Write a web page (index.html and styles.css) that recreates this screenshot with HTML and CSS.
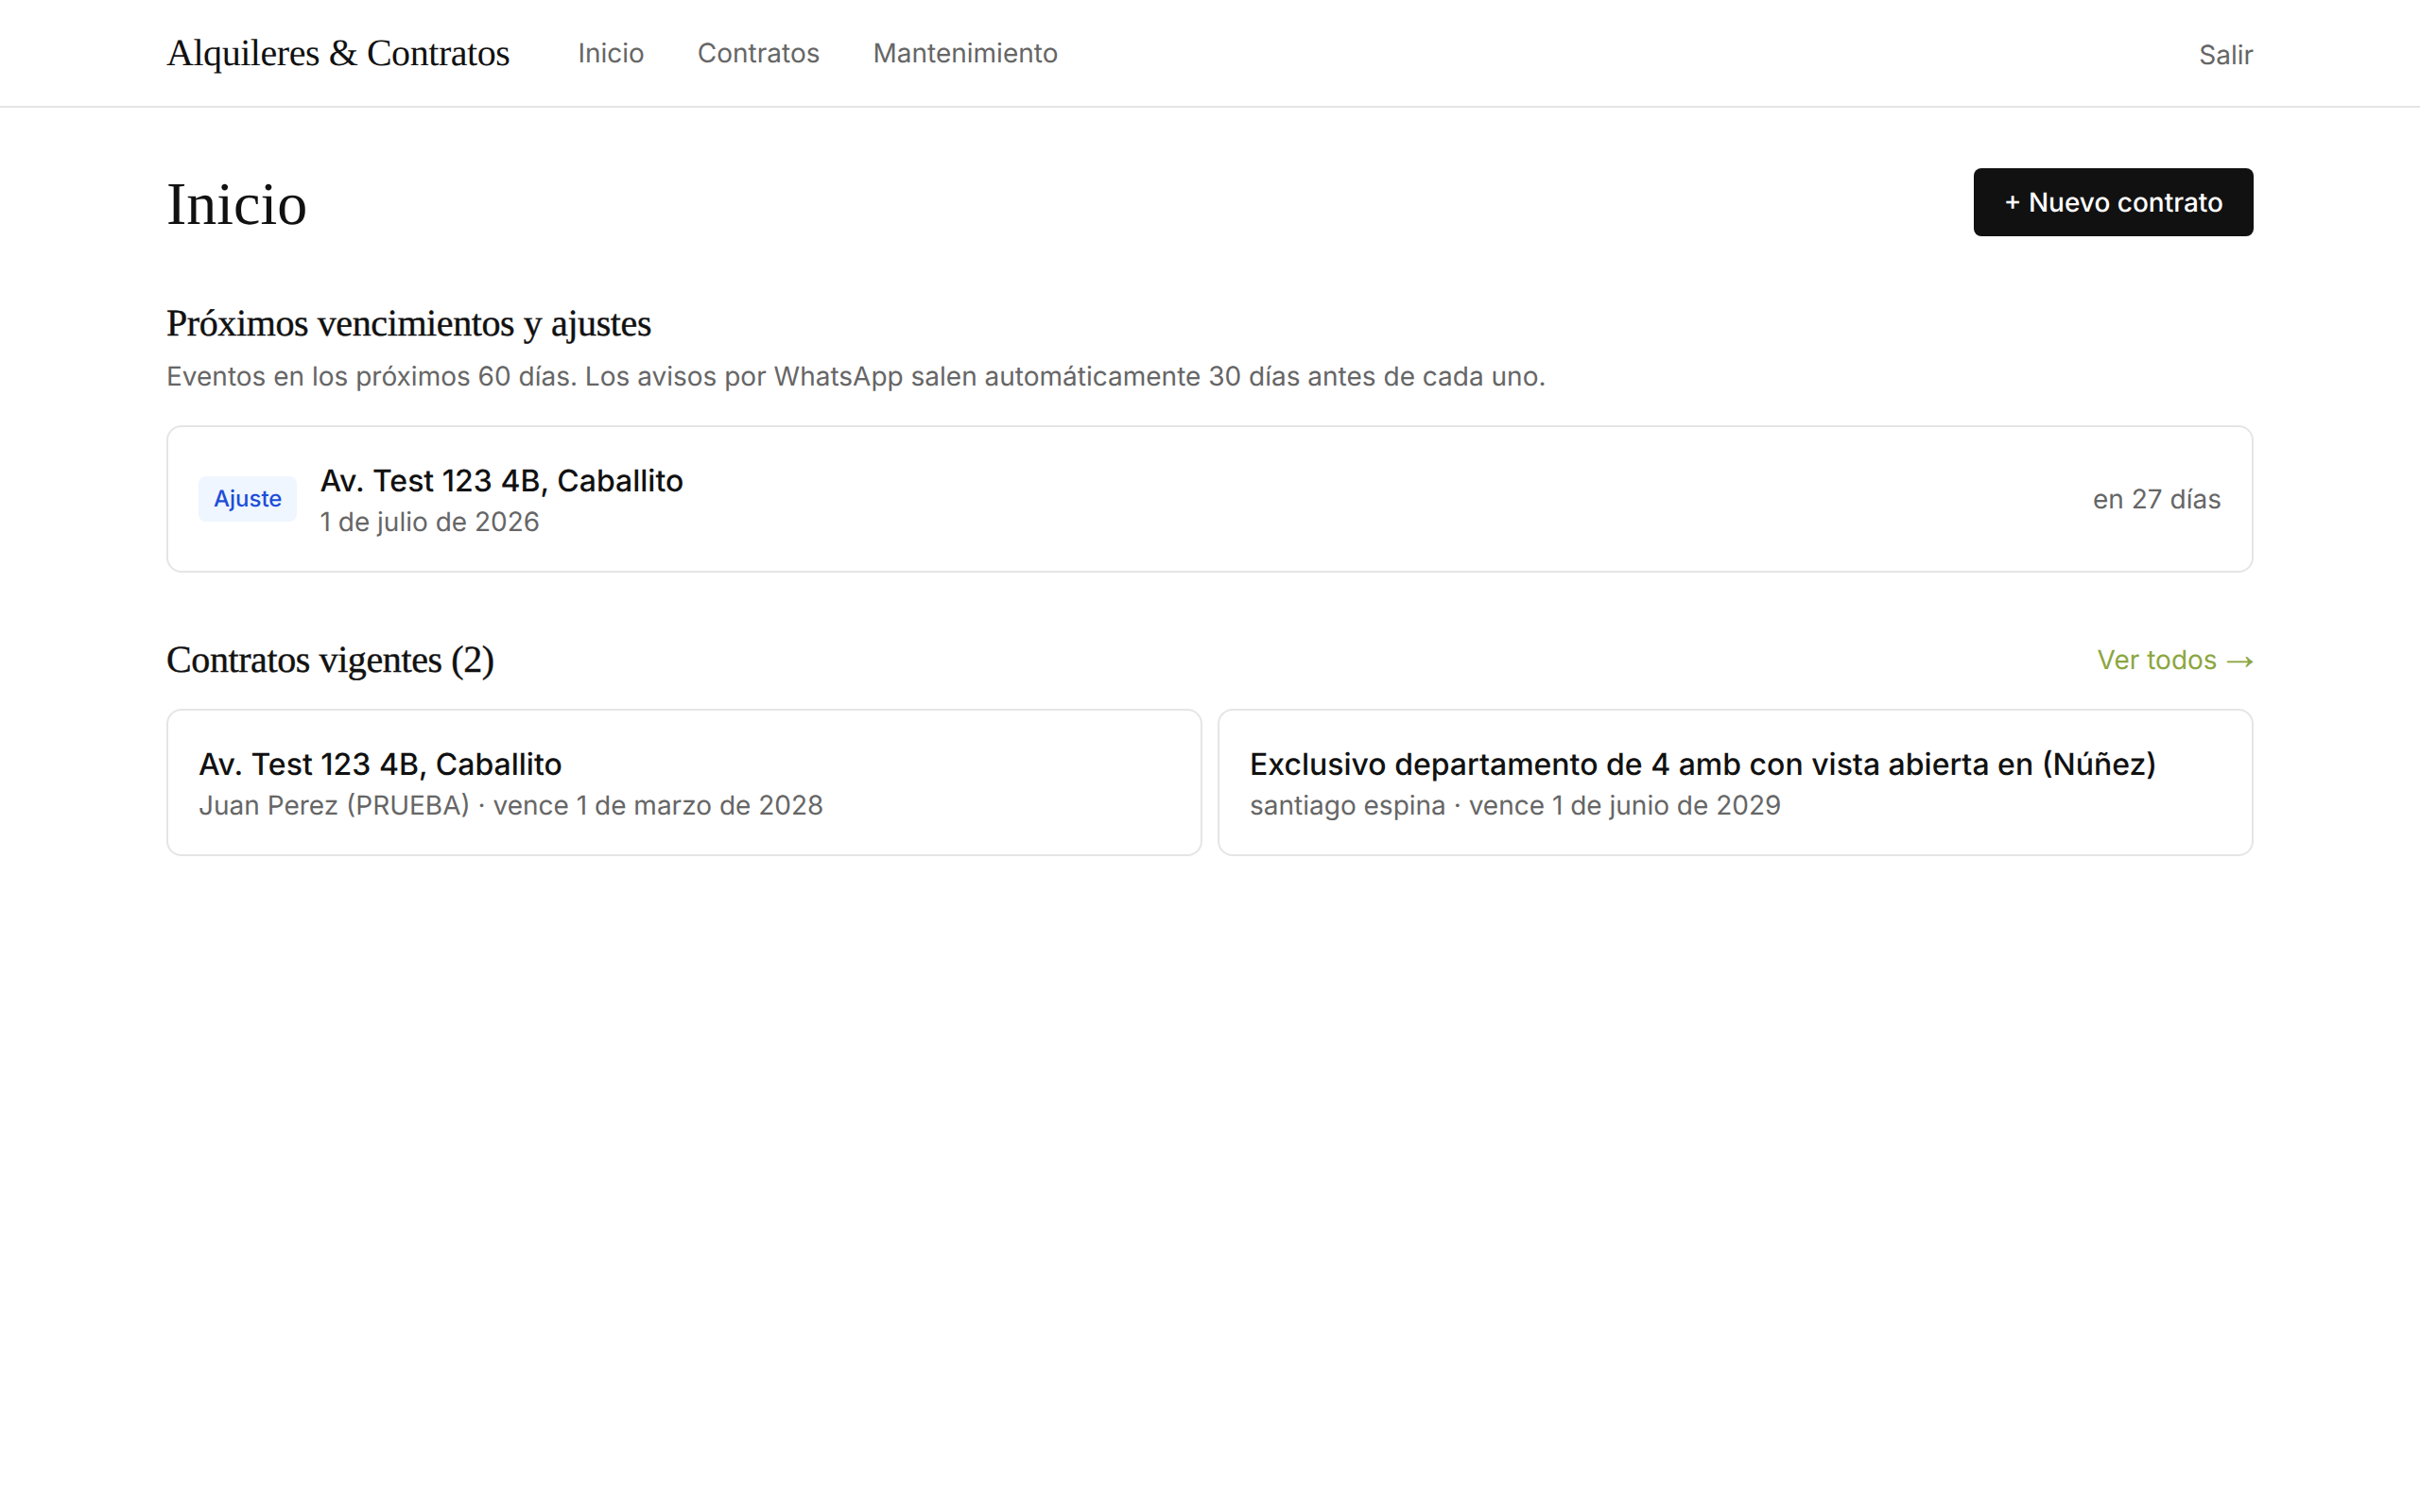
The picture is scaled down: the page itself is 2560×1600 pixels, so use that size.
FILE: index.html
```html
<!DOCTYPE html>
<html lang="es">
<head>
<meta charset="utf-8">
<title>Alquileres &amp; Contratos</title>
<link rel="stylesheet" href="styles.css">
</head>
<body>
<header class="topbar">
  <div class="topbar-inner">
    <div class="topbar-left">
      <a class="brand" href="#">Alquileres &amp; Contratos</a>
      <nav class="nav">
        <a href="#">Inicio</a>
        <a href="#">Contratos</a>
        <a href="#">Mantenimiento</a>
      </nav>
    </div>
    <a class="logout" href="#">Salir</a>
  </div>
</header>
<main class="page">
  <div class="page-head">
    <h1>Inicio</h1>
    <a class="btn" href="#">+ Nuevo contrato</a>
  </div>
  <section class="section">
    <h2>Próximos vencimientos y ajustes</h2>
    <p class="lead">Eventos en los próximos 60 días. Los avisos por WhatsApp salen automáticamente 30 días antes de cada uno.</p>
    <div class="card event">
      <div class="event-main">
        <span class="badge">Ajuste</span>
        <div>
          <div class="card-title">Av. Test 123 4B, Caballito</div>
          <div class="card-sub">1 de julio de 2026</div>
        </div>
      </div>
      <div class="event-when">en 27 días</div>
    </div>
  </section>
  <section class="section">
    <div class="section-head">
      <h2>Contratos vigentes (2)</h2>
      <a class="more" href="#">Ver todos <span class="arrow">→</span></a>
    </div>
    <div class="grid">
      <a class="card" href="#">
        <div class="card-title">Av. Test 123 4B, Caballito</div>
        <div class="card-sub">Juan Perez (PRUEBA) · vence 1 de marzo de 2028</div>
      </a>
      <a class="card" href="#">
        <div class="card-title">Exclusivo departamento de 4 amb con vista abierta en (Núñez)</div>
        <div class="card-sub">santiago espina · vence 1 de junio de 2029</div>
      </a>
    </div>
  </section>
</main>
</body>
</html>
```
FILE: styles.css
```css
* { box-sizing: border-box; }
html, body { margin: 0; padding: 0; background: #fff; }
body { font-family: Inter, "Liberation Sans", sans-serif; color: #111; font-size: 28px; line-height: 40px; text-rendering: geometricPrecision; }
a { color: inherit; text-decoration: none; }
h1, h2, .brand { font-family: "Liberation Serif", serif; font-weight: 400; margin: 0; color: #111; }
.topbar { border-bottom: 2px solid #e5e5e5; }
.topbar-inner { max-width: 2304px; height: 112px; margin: 0 auto; padding: 0 48px; display: flex; align-items: center; justify-content: space-between; }
.topbar-left { display: flex; align-items: center; gap: 72px; }
.brand { font-size: 40px; line-height: 56px; letter-spacing: -0.45px; }
.nav { display: flex; gap: 56px; color: #666; }
.logout { color: #666; position: relative; top: 2px; }
.page { max-width: 2304px; margin: 0 auto; padding: 64px 48px; }
.page-head { display: flex; align-items: center; justify-content: space-between; height: 72px; }
h1 { font-size: 64px; line-height: 72px; height: 72px; padding-top: 2px; }
.btn { display: block; height: 72px; padding: 16px 32px; background: #111; color: #fff; border-radius: 8px; font-weight: 500; }
.section { margin-top: 64px; }
h2 { font-size: 40px; line-height: 56px; letter-spacing: -0.4px; -webkit-text-stroke: 0.4px #111; }
.lead { margin: 8px 0 32px; color: #666; }
.card { display: block; border: 2px solid #e5e5e5; border-radius: 16px; padding: 32px; background: #fff; }
.event { display: flex; align-items: center; justify-content: space-between; }
.event-main { display: flex; align-items: center; gap: 24px; }
.badge { display: block; height: 48px; padding: 4px 16px; background: #eff6ff; color: #1d4ed8; border-radius: 8px; font-size: 24px; font-weight: 500; }
.card-title { font-size: 32px; line-height: 48px; height: 48px; font-weight: 500; color: #111; padding-top: 1px; }
.card-sub { color: #666; }
.event-when { color: #666; }
.section-head { display: flex; align-items: center; justify-content: space-between; margin-bottom: 24px; height: 56px; }
.more { color: #8ba63f; white-space: nowrap; }
.arrow { font-family: "Liberation Sans", sans-serif; font-size: 46px; line-height: 0; margin: 0 -8.5px 0 -7px; }
.grid { display: grid; grid-template-columns: 1fr 1fr; gap: 16px; }
```
